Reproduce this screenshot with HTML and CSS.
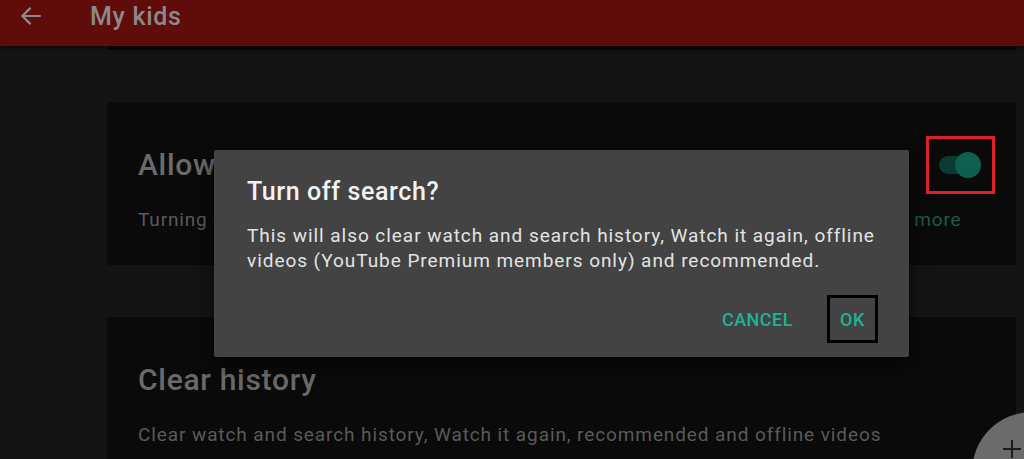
FILE: index.html
```html
<!DOCTYPE html>
<html lang="en">
<head>
    <meta charset="UTF-8">
    <meta name="viewport" content="width=device-width, initial-scale=1.0">
    <title>My kids</title>
    <link rel="stylesheet" href="styles.css">
</head>
<body>
    <!-- Top bar -->
    <div class="app-bar">
        <svg class="back" width="26" height="26" viewBox="0 0 24 24">
            <path d="M21 12H4M11.5 4.5L4 12l7.5 7.5" fill="none" stroke="#8c8c8c" stroke-width="2"/>
        </svg>
        <span class="app-title">My kids</span>
    </div>

    <div class="content">
        <div class="card card-top"></div>

        <!-- Allow search -->
        <div class="card setting">
            <div class="setting-head">
                <div class="setting-title">Allow search</div>
                <div class="toggle-wrap">
                    <div class="toggle">
                        <div class="track"></div>
                        <div class="knob"></div>
                    </div>
                </div>
            </div>
            <div class="setting-desc search-desc">Turning off search restricts your child's experience to a smaller set of videos. <span class="learn">Learn more</span></div>
        </div>

        <!-- Clear history -->
        <div class="card setting">
            <div class="setting-head">
                <div class="setting-title">Clear history</div>
            </div>
            <div class="setting-desc">Clear watch and search history, Watch it again, recommended and offline videos</div>
        </div>
    </div>

    <div class="fab">
        <svg class="fab-icon" width="18" height="18" viewBox="0 0 18 18">
            <path d="M9 0v18M0 9h18" stroke="#1c1c1c" stroke-width="2"/>
        </svg>
    </div>

    <!-- Dialog -->
    <div class="dialog">
        <h2 class="dialog-title">Turn off search?</h2>
        <p class="dialog-body">This will also clear watch and search history, Watch it again, offline videos (YouTube Premium members only) and recommended.</p>
        <div class="dialog-actions">
            <button class="btn">CANCEL</button>
            <button class="btn btn-ok">OK</button>
        </div>
    </div>
</body>
</html>
```

FILE: styles.css
```css
body {
    margin: 0;
    background-color: #141414;
    font-family: Roboto, "Noto Sans", sans-serif;
    overflow: hidden;
    height: 459px;
}
.app-bar {
    height: 46px;
    background-color: #600c0a;
    display: flex;
    align-items: center;
    position: relative;
    z-index: 2;
    box-shadow: 0 2px 4px rgba(0,0,0,0.5);
}
.back {
    margin-left: 18px;
    margin-top: -15px;
}
.app-title {
    margin-left: 46px;
    margin-top: -14px;
    font-size: 25px;
    font-weight: 500;
    letter-spacing: 0.7px;
    color: #8a8a8a;
}
.content {
    margin-left: 107px;
    width: 909px;
    display: flex;
    flex-direction: column;
    gap: 52px;
}
.card {
    background-color: #0a0a0a;
    border-radius: 2px;
}
.card-top {
    height: 4px;
}
.setting {
    height: 163px;
    padding: 0 31px;
    box-sizing: border-box;
}
.setting-head {
    display: flex;
    justify-content: space-between;
    align-items: flex-start;
    height: 92px;
}
.setting-title {
    margin-top: 45px;
    font-size: 30px;
    font-weight: 500;
    letter-spacing: 0.7px;
    color: #6a6a6a;
    line-height: 36px;
}
.setting-desc {
    margin-top: 14px;
    font-size: 19px;
    letter-spacing: 0.9px;
    color: #5a5a5a;
    line-height: 24px;
    white-space: nowrap;
    overflow: hidden;
}
.search-desc {
    letter-spacing: 0.85px;
}
.learn {
    color: #1b5a4b;
}
.toggle-wrap {
    margin-top: 34px;
    margin-right: -10px;
    width: 69px;
    height: 58px;
    box-sizing: border-box;
    border: 3px solid #dc2229;
    display: flex;
    align-items: center;
    justify-content: center;
}
.toggle {
    position: relative;
    width: 42px;
    height: 26px;
}
.track {
    position: absolute;
    left: -1px;
    top: 4px;
    width: 36px;
    height: 18px;
    border-radius: 9px;
    background-color: #0b3a30;
}
.knob {
    position: absolute;
    right: 1px;
    top: 0;
    width: 26px;
    height: 26px;
    border-radius: 50%;
    background-color: #0e5f4e;
}
.fab {
    position: absolute;
    left: 972px;
    top: 412px;
    width: 120px;
    height: 120px;
    border-radius: 50%;
    background-color: #6b6b6b;
}
.fab-icon {
    position: absolute;
    left: 31px;
    top: 28px;
}
.dialog {
    position: absolute;
    left: 214px;
    top: 150px;
    width: 695px;
    height: 207px;
    box-sizing: border-box;
    background-color: #434343;
    border-radius: 2px;
    padding: 26px 28px 0 33px;
    box-shadow: 0 6px 20px rgba(0,0,0,0.6);
    z-index: 3;
}
.dialog-title {
    margin: 0;
    font-size: 25px;
    font-weight: 500;
    letter-spacing: 0.6px;
    color: #f2f2f2;
    line-height: 32px;
}
.dialog-body {
    margin: 15px 0 0 0;
    font-size: 19px;
    letter-spacing: 0.95px;
    color: #e3e3e3;
    line-height: 25px;
}
.dialog-actions {
    display: flex;
    justify-content: flex-end;
    gap: 34px;
    margin-top: 22px;
    margin-right: 3px;
}
.btn {
    background: none;
    border: none;
    font-family: Roboto, sans-serif;
    font-size: 18px;
    font-weight: 500;
    letter-spacing: 0.5px;
    color: #1db495;
    padding: 0;
    height: 48px;
}
.btn-ok {
    width: 51px;
    border: 3px solid #000;
    box-sizing: border-box;
}
```
